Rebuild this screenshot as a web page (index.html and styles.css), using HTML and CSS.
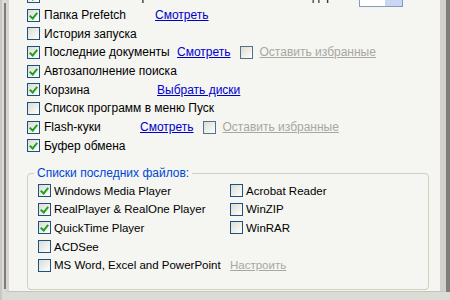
FILE: index.html
```html
<!DOCTYPE html>
<html lang="ru">
<head>
    <meta charset="UTF-8">
    <title>Очистка</title>
    <link rel="stylesheet" href="styles.css">
</head>
<body>

    <div class="window">
        <div class="panel">

            <!-- Options list -->
            <div class="list">
                <div class="row top-row">
                    <span class="box checked"></span>
                    <span class="label">Кэш эскизов изображений Windows</span>
                    <span class="delay">Задержка:</span>
                    <span class="spin"><span class="spin-value">10</span><span class="spin-btn"></span></span>
                    <span class="unit">мин</span>
                </div>
                <div class="row">
                    <span class="box checked"></span>
                    <span class="label w-prefetch">Папка Prefetch</span>
                    <a class="link">Смотреть</a>
                </div>
                <div class="row">
                    <span class="box"></span>
                    <span class="label">История запуска</span>
                </div>
                <div class="row">
                    <span class="box checked"></span>
                    <span class="label w-docs">Последние документы</span>
                    <a class="link w-docs-link">Смотреть</a>
                    <span class="box keep"></span>
                    <a class="link disabled">Оставить избранные</a>
                </div>
                <div class="row">
                    <span class="box checked"></span>
                    <span class="label">Автозаполнение поиска</span>
                </div>
                <div class="row">
                    <span class="box checked"></span>
                    <span class="label w-bin">Корзина</span>
                    <a class="link">Выбрать диски</a>
                </div>
                <div class="row">
                    <span class="box"></span>
                    <span class="label">Список программ в меню Пуск</span>
                </div>
                <div class="row">
                    <span class="box checked"></span>
                    <span class="label w-flash">Flash-куки</span>
                    <a class="link w-flash-link">Смотреть</a>
                    <span class="box keep"></span>
                    <a class="link disabled">Оставить избранные</a>
                </div>
                <div class="row">
                    <span class="box checked"></span>
                    <span class="label">Буфер обмена</span>
                </div>
            </div>

            <!-- Recent files group -->
            <div class="group">
                <div class="legend">Списки последних файлов:</div>
                <div class="group-grid">
                    <div class="row">
                        <span class="box checked"></span>
                        <span class="label">Windows Media Player</span>
                    </div>
                    <div class="row">
                        <span class="box"></span>
                        <span class="label">Acrobat Reader</span>
                    </div>
                    <div class="row">
                        <span class="box checked"></span>
                        <span class="label">RealPlayer &amp; RealOne Player</span>
                    </div>
                    <div class="row">
                        <span class="box"></span>
                        <span class="label">WinZIP</span>
                    </div>
                    <div class="row">
                        <span class="box checked"></span>
                        <span class="label">QuickTime Player</span>
                    </div>
                    <div class="row">
                        <span class="box"></span>
                        <span class="label">WinRAR</span>
                    </div>
                    <div class="row">
                        <span class="box"></span>
                        <span class="label">ACDSee</span>
                    </div>
                    <div class="row"></div>
                    <div class="row">
                        <span class="box"></span>
                        <span class="label">MS Word, Excel and PowerPoint</span>
                    </div>
                    <div class="row">
                        <a class="link disabled">Настроить</a>
                    </div>
                </div>
            </div>

        </div>
    </div>

</body>
</html>
```

FILE: styles.css
```css
body {
    margin: 0;
    padding: 0;
    font-family: "Liberation Sans", Arial, sans-serif;
    font-size: 12px;
    color: #000;
    background: #e2e1dc;
}

.window {
    height: 300px;
    box-sizing: border-box;
    display: flex;
    padding: 0 4px 8px 2px;
    background: #dcdbd6;
    border-left: 2px solid #c9c8c4;
    overflow: hidden;
}

.panel {
    flex: 1;
    display: flex;
    flex-direction: column;
    margin-left: 2px;
    padding: 0 9px 0 18px;
    background: #f5f5f2;
    border-left: 3px solid #d6d5d0;
    border-right: 6px solid #d2d1cc;
    border-bottom: 1px solid #c4c3be;
    box-shadow: -5px 0 0 -3px #7d7c7a, 4px 0 0 0 #7f7e7c;
}

.list {
    margin-top: -13px;
}

.row {
    height: 18.7px;
    display: flex;
    align-items: center;
    white-space: nowrap;
}

.box {
    width: 11px;
    height: 11px;
    flex: none;
    border: 1px solid #1d5280;
    background: linear-gradient(135deg, #dcdcd6 0%, #f4f4f0 70%, #fff 100%);
    margin-right: 4px;
    position: relative;
}

.box.keep {
    border-color: #55708c;
    margin-right: 7px;
}

.box.checked::after {
    content: "";
    position: absolute;
    left: 3px;
    top: 1px;
    width: 3px;
    height: 6px;
    border-right: 2px solid #21a121;
    border-bottom: 2px solid #21a121;
    transform: rotate(40deg);
}

.label {
    display: inline-block;
}

.w-prefetch { width: 111px; }
.w-docs { width: 133px; }
.w-bin { width: 113px; }
.w-flash { width: 96px; }

.link {
    color: #0000cc;
    text-decoration: underline;
}

.w-docs-link,
.w-flash-link {
    margin-right: 9px;
}

.link.disabled {
    color: #a8a8a0;
}

/* Top (clipped) row */
.delay {
    margin-left: auto;
}

.spin {
    display: flex;
    width: 44px;
    height: 21px;
    margin: 0 4px 0 3px;
    border: 1px solid #7f9db9;
    background: #fff;
    box-sizing: border-box;
}

.spin-value {
    flex: 1;
    padding-left: 4px;
}

.spin-btn {
    width: 17px;
    background: #c9d6f5;
    border-left: 1px solid #fff;
}

.unit {
    margin-right: 2px;
}

/* Group box */
.group {
    position: relative;
    margin-top: 18px;
    margin-right: 2px;
    height: 108px;
    border: 1px solid #d0d0bf;
    border-radius: 4px;
    padding: 7px 0 0 10px;
    font-size: 11.5px;
}

.legend {
    position: absolute;
    top: -8px;
    left: 6px;
    padding: 0 3px;
    background: #f5f5f2;
    color: #0046d5;
    font-size: 12px;
}

.group-grid {
    display: grid;
    grid-template-columns: 192px 1fr;
}

.group .box {
    margin-right: 3px;
}
```
